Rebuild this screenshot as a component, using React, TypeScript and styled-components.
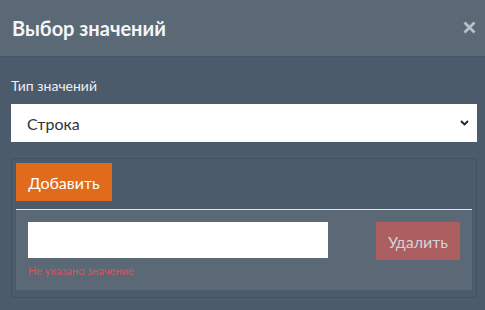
import React from "react";
import styled, { createGlobalStyle } from "styled-components";

const Global = createGlobalStyle`
  html, body { margin: 0; padding: 0; background: #4c5b6b; }
  body { font-family: Lato, "Open Sans", "Liberation Sans", sans-serif; }
  * { box-sizing: border-box; }
`;

const Modal = styled.div`
  width: 485px;
  height: 310px;
  background: #4c5b6b;
  display: flex;
  flex-direction: column;
  overflow: hidden;
`;

const Header = styled.div`
  height: 57px;
  padding: 0 9px 0 12px;
  display: flex;
  align-items: center;
  justify-content: space-between;
  background: #5b6876;
  border-bottom: 1px solid #475462;
`;

const Title = styled.h2`
  margin: 0;
  font-size: 20px;
  font-weight: 700;
  color: #f3f5f7;
`;

const Close = styled.button`
  border: 0;
  background: none;
  padding: 0;
  width: 14px;
  height: 14px;
  margin-top: -2px;
  display: flex;
  align-items: center;
  justify-content: center;
  cursor: pointer;
`;

const Body = styled.div`
  padding: 19px 8px 0 11px;
  display: flex;
  flex-direction: column;
`;

const Label = styled.label`
  font-size: 14px;
  line-height: 19px;
  color: #eef1f4;
  margin-bottom: 9px;
`;

const SelectWrap = styled.div`
  position: relative;
  height: 38px;
  background: #fff;
  display: flex;
  align-items: center;
  padding: 0 16px;
  font-size: 16px;
  color: #333;
`;

const Chevron = styled.svg`
  position: absolute;
  right: 8px;
  top: 16px;
`;

const Fieldset = styled.div`
  margin-top: 16px;
  border: 1px solid #43505d;
  padding: 4px 4px 7px 4px;
  display: flex;
  flex-direction: column;
`;

const Button = styled.button<{ $variant: "add" | "remove" }>`
  border: 0;
  height: 38px;
  font-family: inherit;
  font-size: 16px;
  padding: 0;
  cursor: pointer;
  background: ${(p) => (p.$variant === "add" ? "#e06b1c" : "#ad5e60")};
  color: ${(p) => (p.$variant === "add" ? "#ffffff" : "#d2d3d6")};
  width: ${(p) => (p.$variant === "add" ? "96px" : "84px")};
`;

const Divider = styled.div`
  margin-top: 8px;
  height: 1px;
  background: #e2e6ea;
`;

const Row = styled.div`
  background: #5b6876;
  height: 80px;
  padding: 12px 12px 0 12px;
  display: flex;
  justify-content: space-between;
  align-items: flex-start;
`;

const Field = styled.div`
  display: flex;
  flex-direction: column;
`;

const Input = styled.input`
  width: 300px;
  height: 36px;
  border: 0;
  outline: none;
  background: #fff;
`;

const Error = styled.span`
  margin-top: 6px;
  font-size: 11px;
  color: #d9535b;
`;

export default function App() {
  return (
    <Modal>
      <Global />
      <Header>
        <Title>Выбор значений</Title>
        <Close aria-label="close">
          <svg width="13" height="13" viewBox="0 0 13 13">
            <path d="M1.5 1.5 L11.5 11.5 M11.5 1.5 L1.5 11.5" stroke="#b9c0c7" strokeWidth="2.8" />
          </svg>
        </Close>
      </Header>
      <Body>
        <Label>Тип значений</Label>
        <SelectWrap>
          Строка
          <Chevron width="9" height="6" viewBox="0 0 9 6">
            <path d="M1 1 L4.5 4.5 L8 1" stroke="#222" strokeWidth="1.8" fill="none" />
          </Chevron>
        </SelectWrap>
        <Fieldset>
          <Button $variant="add">Добавить</Button>
          <Divider />
          <Row>
            <Field>
              <Input />
              <Error>Не указано значение</Error>
            </Field>
            <Button $variant="remove">Удалить</Button>
          </Row>
        </Fieldset>
      </Body>
    </Modal>
  );
}
